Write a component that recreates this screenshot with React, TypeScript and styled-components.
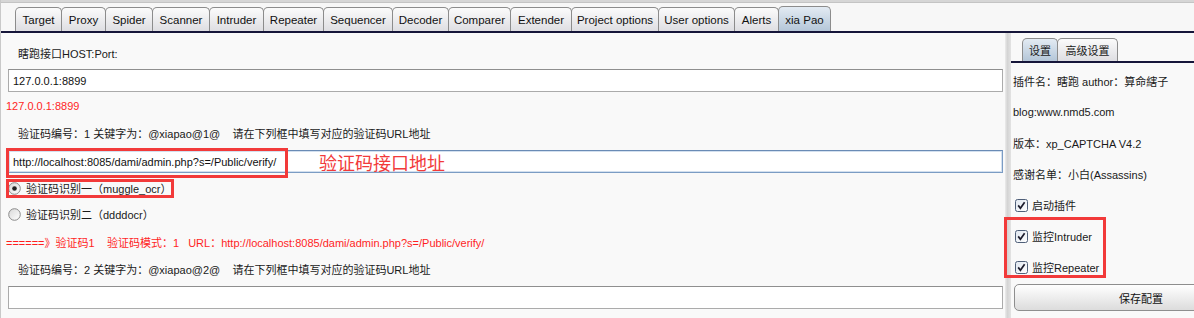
import React from 'react'
import styled, { createGlobalStyle } from 'styled-components'

const GlobalStyle = createGlobalStyle`
    html, body {
        margin: 0;
        padding: 0;
        width: 1194px;
        height: 318px;
        overflow: hidden;
        background: #f9f9f9;
        font-family: "Liberation Sans", "Noto Sans CJK SC", Arial, sans-serif;
        font-size: 11px;
        color: #1a1a1a;
    }
    * {
        box-sizing: border-box;
    }
`

const mainTabs: [string, number][] = [
    ['Target', 47],
    ['Proxy', 45],
    ['Spider', 48],
    ['Scanner', 58],
    ['Intruder', 55],
    ['Repeater', 61],
    ['Sequencer', 70],
    ['Decoder', 57],
    ['Comparer', 63],
    ['Extender', 62],
    ['Project options', 88],
    ['User options', 77],
    ['Alerts', 45],
    ['xia Pao', 53],
]

const CheckIcon = () => (
    <svg width="13" height="13" viewBox="0 0 13 13">
        <defs>
            <linearGradient id="cbg" x1="0" y1="0" x2="1" y2="1">
                <stop offset="0" stopColor="#dfe6ef" />
                <stop offset="1" stopColor="#ffffff" />
            </linearGradient>
        </defs>
        <rect x="0.5" y="0.5" width="12" height="12" rx="2" fill="url(#cbg)" stroke="#4f5f78" />
        <path d="M3.2 6.4 L5.4 9.2 L9.6 3.2" fill="none" stroke="#1c1c2c" strokeWidth="1.7" />
    </svg>
)

const RadioIcon = ({ checked }: { checked?: boolean }) => (
    <svg width="13" height="13" viewBox="0 0 13 13">
        <defs>
            <linearGradient id="rbg" x1="0" y1="0" x2="1" y2="1">
                <stop offset="0" stopColor="#d8d8d8" />
                <stop offset="1" stopColor="#ffffff" />
            </linearGradient>
        </defs>
        <circle cx="6.5" cy="6.5" r="5.8" fill="url(#rbg)" stroke="#8a8a8a" />
        {checked && <circle cx="6.5" cy="6.5" r="2.3" fill="#222" />}
    </svg>
)

const App = () => {
    return (
        <Page>
            <GlobalStyle />
            <TopStrip />
            <TabBar>
                {mainTabs.map(([name, w]) => (
                    <MainTab key={name} $active={name === 'xia Pao'} style={{ width: w }}>
                        {name}
                    </MainTab>
                ))}
            </TabBar>
            <Body>
                <LeftPanel>
                    <TextRow $mt={10} $indent={18}>瞎跑接口HOST:Port:</TextRow>
                    <Field $mt={6} defaultValue="127.0.0.1:8899" />
                    <TextRow $mt={4} $indent={6} $red>127.0.0.1:8899</TextRow>
                    <TextRow $mt={7} $indent={18}>
                        验证码编号：1 关键字为：@xiapao@1@&nbsp;&nbsp;&nbsp;&nbsp;请在下列框中填写对应的验证码URL地址
                    </TextRow>
                    <UrlWrap>
                        <Field $mt={7} $focused defaultValue="http://localhost:8085/dami/admin.php?s=/Public/verify/" />
                        <MarkBox style={{ left: -2, top: 5, width: 282, height: 30 }} />
                        <Note>验证码接口地址</Note>
                    </UrlWrap>
                    <RadioRow $mt={6}>
                        <RadioIcon checked />
                        <span>验证码识别一（muggle_ocr）</span>
                        <MarkBox style={{ left: -2, top: 0, width: 168, height: 19 }} />
                    </RadioRow>
                    <RadioRow $mt={8}>
                        <RadioIcon />
                        <span>验证码识别二（ddddocr）</span>
                    </RadioRow>
                    <TextRow $mt={9} $indent={6} $red>
                        ======》验证码1&nbsp;&nbsp;&nbsp;&nbsp;验证码模式：1&nbsp;&nbsp;&nbsp;URL：http://localhost:8085/dami/admin.php?s=/Public/verify/
                    </TextRow>
                    <TextRow $mt={7} $indent={18}>
                        验证码编号：2 关键字为：@xiapao@2@&nbsp;&nbsp;&nbsp;&nbsp;请在下列框中填写对应的验证码URL地址
                    </TextRow>
                    <Field $mt={7} defaultValue="" />
                </LeftPanel>
                <Divider />
                <RightPanel>
                    <SubTabBar>
                        <SubTab $active $w={36}>设置</SubTab>
                        <SubTab $w={61}>高级设置</SubTab>
                    </SubTabBar>
                    <InfoList>
                        <InfoRow>插件名：瞎跑 author：算命縖子</InfoRow>
                        <InfoRow>blog:www.nmd5.com</InfoRow>
                        <InfoRow>版本：xp_CAPTCHA V4.2</InfoRow>
                        <InfoRow>感谢名单：小白(Assassins)</InfoRow>
                        <CheckRow>
                            <CheckIcon />
                            <span>启动插件</span>
                        </CheckRow>
                        <CheckGroup>
                            <CheckRow>
                                <CheckIcon />
                                <span>监控Intruder</span>
                            </CheckRow>
                            <CheckRow>
                                <CheckIcon />
                                <span>监控Repeater</span>
                            </CheckRow>
                            <MarkBox style={{ left: -9, top: -9, width: 102, height: 61 }} />
                        </CheckGroup>
                    </InfoList>
                    <SaveButton>保存配置</SaveButton>
                </RightPanel>
            </Body>
        </Page>
    )
}

export default App

const Page = styled.div`
    width: 1194px;
    height: 318px;
    display: flex;
    flex-direction: column;
    background: #f9f9f9;
    border-left: 1px solid #c9c9c9;
`
const TopStrip = styled.div`
    height: 3px;
    background: #d6d6d6;
    border-bottom: 1px solid #c4c4c4;
`
const TabBar = styled.div`
    display: flex;
    align-items: flex-end;
    height: 30px;
    padding-left: 14px;
    border-bottom: 2px solid #16163a;
    background: #f7f7f7;
`
const MainTab = styled.div<{ $active?: boolean }>`
    height: ${(p) => (p.$active ? '25px' : '24px')};
    margin-left: -1px;
    display: flex;
    align-items: center;
    justify-content: center;
    padding-top: 1px;
    font-size: 11.5px;
    color: #111;
    border: 1px solid #8c8c8c;
    border-bottom: none;
    border-radius: 5px 5px 0 0;
    background: ${(p) =>
        p.$active
            ? 'linear-gradient(#e3ebf3, #b4c6d8)'
            : 'linear-gradient(#fbfbfb, #dedee2)'};
    &:first-child {
        margin-left: 0;
    }
`
const Body = styled.div`
    flex: 1;
    display: flex;
    min-height: 0;
`
const LeftPanel = styled.div`
    width: 1004px;
    display: flex;
    flex-direction: column;
    padding-left: 7px;
`
// $indent is the x where the text starts, counted from the page edge
const TextRow = styled.div<{ $mt: number; $indent: number; $red?: boolean }>`
    height: 20px;
    margin-top: ${(p) => p.$mt}px;
    margin-left: ${(p) => Math.min(0, p.$indent - 8)}px;
    padding-left: ${(p) => Math.max(0, p.$indent - 8)}px;
    display: flex;
    align-items: center;
    white-space: nowrap;
    color: ${(p) => (p.$red ? '#ff1f1f' : '#1a1a1a')};
`
const Field = styled.input<{ $mt: number; $focused?: boolean }>`
    display: block;
    width: 995px;
    height: 23px;
    margin-top: ${(p) => p.$mt}px;
    padding: 0 4px;
    font-family: "Liberation Sans", "Noto Sans CJK SC", sans-serif;
    font-size: 11px;
    color: #111;
    background: #fff;
    border: 1px solid ${(p) => (p.$focused ? '#7b9cc4' : '#ababab')};
    border-top-color: ${(p) => (p.$focused ? '#6a8bb5' : '#8f8f8f')};
    box-shadow: ${(p) => (p.$focused ? 'inset 0 0 0 1px #d3e0ef' : 'none')};
    outline: none;
`
const UrlWrap = styled.div`
    position: relative;
`
const MarkBox = styled.div`
    position: absolute;
    border: 3px solid #f23a3a;
    pointer-events: none;
`
const Note = styled.div`
    position: absolute;
    left: 311px;
    top: 7px;
    height: 23px;
    display: flex;
    align-items: center;
    font-family: "Noto Sans CJK SC", sans-serif;
    font-size: 18px;
    color: #f23a3a;
`
const RadioRow = styled.div<{ $mt: number }>`
    position: relative;
    height: 18px;
    margin-top: ${(p) => p.$mt}px;
    display: flex;
    align-items: center;
    gap: 5px;
    white-space: nowrap;
`
const Divider = styled.div`
    width: 6px;
    background: linear-gradient(90deg, #ececec, #d4d4d4 40%, #e3e3e3);
`
const RightPanel = styled.div`
    flex: 1;
    display: flex;
    flex-direction: column;
    min-width: 0;
`
const SubTabBar = styled.div`
    display: flex;
    align-items: flex-end;
    height: 30px;
    padding-left: 11px;
    border-bottom: 2px solid #16163a;
`
const SubTab = styled.div<{ $active?: boolean; $w: number }>`
    width: ${(p) => p.$w}px;
    height: 23px;
    margin-left: -1px;
    display: flex;
    align-items: center;
    justify-content: center;
    font-size: 11px;
    border: 1px solid #8c8c8c;
    border-bottom: none;
    border-radius: 5px 5px 0 0;
    background: ${(p) =>
        p.$active ? 'linear-gradient(#e3ebf3, #b4c6d8)' : 'linear-gradient(#fbfbfb, #dedee2)'};
    &:first-child {
        margin-left: 0;
    }
`
const InfoList = styled.div`
    display: flex;
    flex-direction: column;
    gap: 11px;
    padding: 8px 0 0 2px;
`
const InfoRow = styled.div`
    height: 20px;
    display: flex;
    align-items: center;
    white-space: nowrap;
`
const CheckRow = styled.div`
    height: 20px;
    display: flex;
    align-items: center;
    gap: 4px;
    padding-left: 2px;
    white-space: nowrap;
`
const CheckGroup = styled.div`
    position: relative;
    display: flex;
    flex-direction: column;
    gap: 11px;
`
const SaveButton = styled.div`
    width: 254px;
    height: 27px;
    margin: 7px 0 0 3px;
    flex-shrink: 0;
    display: flex;
    align-items: center;
    justify-content: center;
    font-size: 11px;
    color: #111;
    border: 1px solid #8e8e8e;
    border-radius: 5px;
    background: linear-gradient(#ffffff, #dcdcdc);
`
